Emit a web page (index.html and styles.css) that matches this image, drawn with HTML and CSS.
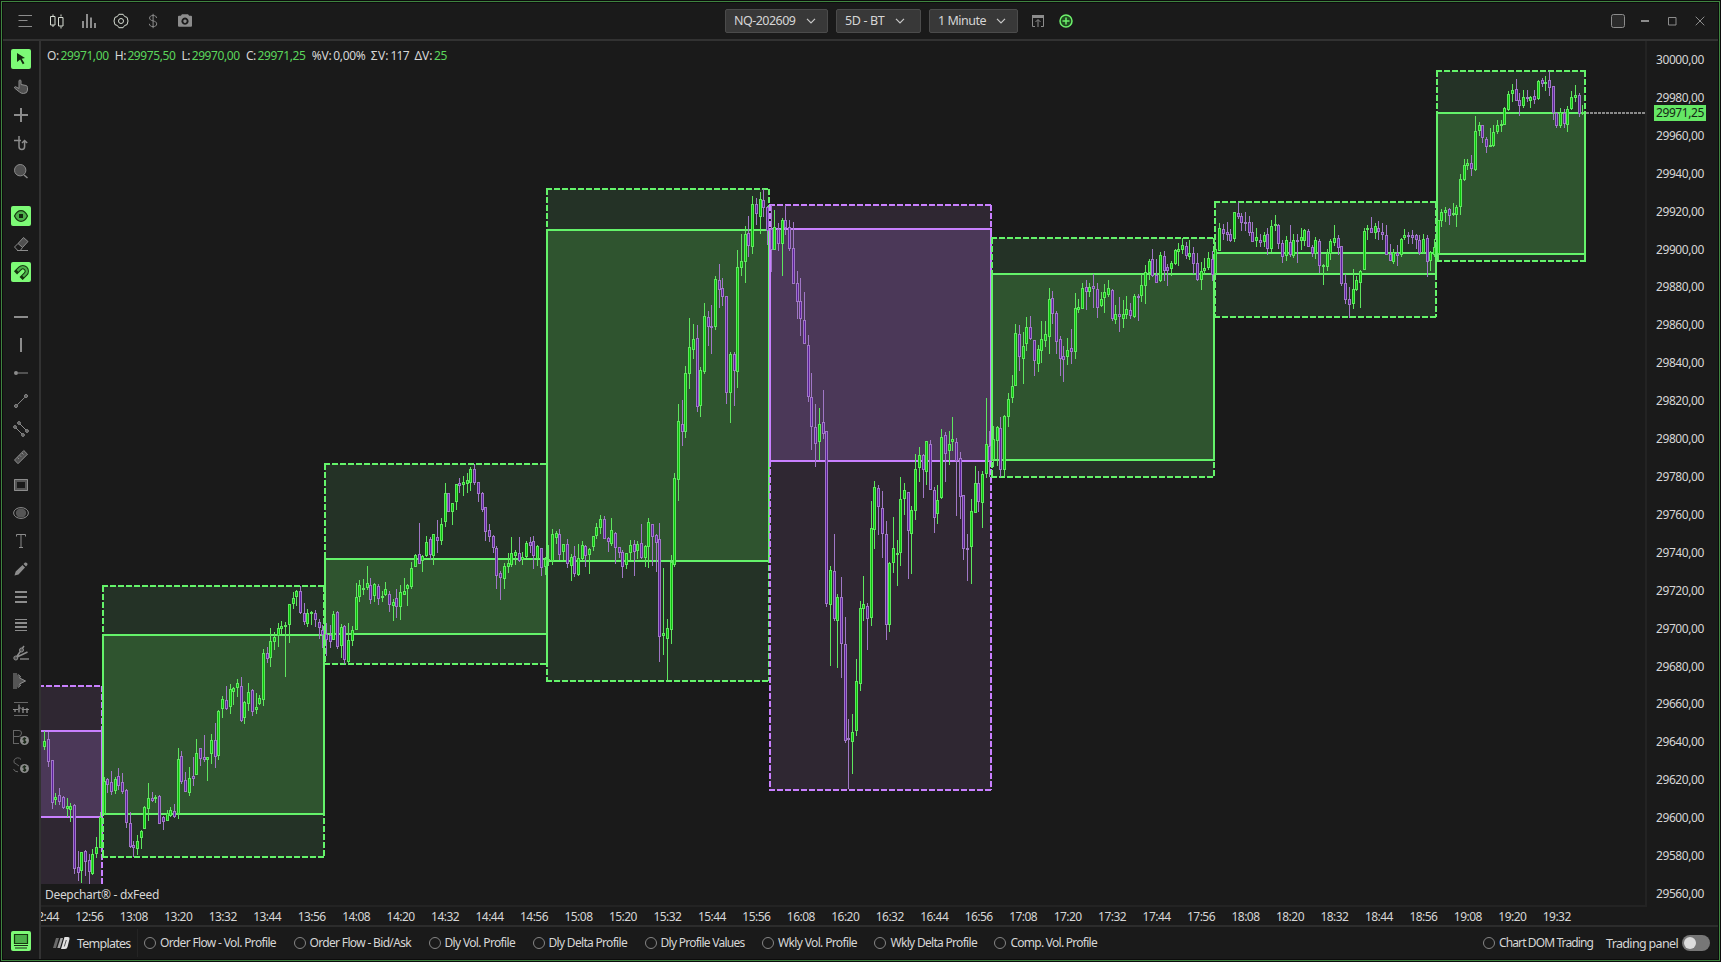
FILE: index.html
```html
<!DOCTYPE html>
<html lang="en">
<head>
<meta charset="utf-8">
<title>Deepchart</title>
<link rel="stylesheet" href="styles.css">
</head>
<body>
<div class="window">
  <header class="topbar">
    <div class="top-tools">
      <svg class="ic" viewBox="0 0 16 16"><path class="s" d="M1.5 2.5h13.5M1.5 7.5h9M1.5 13.5h13.5"/></svg>
      <svg class="ic lit" viewBox="0 0 16 16"><path class="s" d="M4 1.500v2M4 12v2M12 1.500v2M12 13.500v2M1.500 3.500h4.500v8.500h-4.500zM9.500 4.500h4.500v8.500h-4.500z"/></svg>
      <svg class="ic" viewBox="0 0 16 16"><path class="s w2" d="M2 8v7M6 1v14M10 4.500v10.500M14 10v5"/></svg>
      <svg class="ic lit" viewBox="0 0 16 16"><circle class="s" cx="8" cy="8" r="2.500"/><path class="s" d="M5.900 1.300h4.200l1.500 2.200 2.500.9.9 3.600-.9 3.600-2.500.9-1.500 2.200H5.900l-1.500-2.200-2.500-.9L1 8l.9-3.600 2.500-.9z"/></svg>
      <svg class="ic" viewBox="0 0 16 16"><path class="s" d="M11.500 5c0-1.700-1.300-2.500-3.400-2.500S4.600 3.300 4.600 5s1.400 2.400 3.500 2.900 3.600 1.200 3.600 3-1.500 2.700-3.600 2.700-3.700-.9-3.700-2.800M8.100.8v14.400"/></svg>
      <svg class="ic" viewBox="0 0 16 16"><path class="f" fill-rule="evenodd" d="M5 1.200h6l1.200 1.600H14q1 0 1 1v9q0 1-1 1H2q-1 0-1-1v-9q0-1 1-1h1.800zM8 4.600a3.600 3.600 0 1 0 .01 0zM8 6.500a1.700 1.700 0 1 1-.01 0z"/></svg>
    </div>
    <div class="selectors">
      <div class="drop d1"><span data-w="61.500">NQ-202609</span><svg viewBox="0 0 10 6"><path class="s" d="M1 .8l4 4 4-4"/></svg></div>
      <div class="drop d2"><span data-w="39.500">5D - BT</span><svg viewBox="0 0 10 6"><path class="s" d="M1 .8l4 4 4-4"/></svg></div>
      <div class="drop d3"><span data-w="48">1 Minute</span><svg viewBox="0 0 10 6"><path class="s" d="M1 .8l4 4 4-4"/></svg></div>
      <svg class="ic pop" viewBox="0 0 16 16"><path class="s" d="M5 13.500H2.500v-11h11v11H11M8 14V7M5.500 9L8 6.500 10.500 9"/><path class="f" d="M2 2h12v3H2z"/></svg>
      <svg class="ic add" viewBox="0 0 16 16"><circle cx="8" cy="8" r="6"/><path d="M8 4.500v7M4.500 8h7"/></svg>
    </div>
    <div class="win-tools">
      <svg class="ic" viewBox="0 0 16 16"><rect class="s box" x="1.500" y="1.500" width="13" height="13" rx="2"/></svg>
      <svg class="ic" viewBox="0 0 16 16"><path class="s w2" d="M4 8h8"/></svg>
      <svg class="ic" viewBox="0 0 16 16"><path class="s" d="M4.500 4.500h7.500v7.500H4.500z"/></svg>
      <svg class="ic" viewBox="0 0 16 16"><path class="s" d="M3.700 3.700l8.600 8.600M12.300 3.700l-8.600 8.600"/></svg>
    </div>
  </header>

  <div class="workspace">
    <nav class="sidebar">
      <div class="tool on"><svg class="ic" viewBox="0 0 16 16"><path class="dk" d="M4 2l8 5-3.300.8 2.800 4.500-1.800 1-2.500-4.700L4 11z"/></svg></div>
      <div class="tool"><svg class="ic" viewBox="0 0 16 16"><path class="s m" d="M6 9.500V2q0-1 1-1t1 1v3.500l5 1q1.500.4 1.500 2V11q0 3.500-4 3.500-2.500 0-4-1.500L1.500 9q-.3-1.200 1-1.300L6 9.500"/></svg></div>
      <div class="tool"><svg class="ic" viewBox="0 0 16 16"><path class="s w2" d="M8 1v14M1 8h14"/></svg></div>
      <div class="tool"><svg class="ic" viewBox="0 0 16 16"><path class="s w15" d="M1 5.500h7M6 1v10.500q0 3 2.800 3t2.800-3V6M9 8l2.600-2.500L14.200 8"/></svg></div>
      <div class="tool"><svg class="ic" viewBox="0 0 16 16"><circle class="s m" cx="7.200" cy="7.200" r="5.700"/><path class="s w15" d="M11 12l3.500 3"/></svg></div>
      <div class="rule"></div>
      <div class="tool on"><svg class="ic" viewBox="0 0 16 16"><path class="eye" d="M1.500 8Q4 2.700 8 2.700T14.500 8Q12 13.300 8 13.300T1.500 8z"/><path class="dk" d="M6 6h4v4H6z"/></svg></div>
      <div class="tool"><svg class="ic" viewBox="0 0 16 16"><path class="s m" d="M10.500 1.500l4.500 4-5.500 6-4.500-4z"/><path class="s" d="M5 7.500L1.500 11l3.300 3.500h2.500l2.200-3M4 14.500h11"/></svg></div>
      <div class="tool on"><svg class="ic" viewBox="0 0 16 16"><g fill="none"><path stroke="#16360f" stroke-width="4.400" d="M2.500 8.900L7 4.400A3.950 3.950 0 0 1 12.600 10L8.100 14.500"/><path stroke="#4cb04a" stroke-width="2.400" d="M4.500 6.900L7 4.400A3.950 3.950 0 0 1 12.600 10L10.100 12.500"/></g></svg></div>
      <div class="rule"></div>
      <div class="tool"><svg class="ic" viewBox="0 0 16 16"><path class="s w2" d="M1 8h14"/></svg></div>
      <div class="tool"><svg class="ic" viewBox="0 0 16 16"><path class="s w2" d="M8 1v14"/></svg></div>
      <div class="tool"><svg class="ic" viewBox="0 0 16 16"><circle class="f" cx="3" cy="8" r="2"/><path class="s dim w15" d="M5 8h10"/></svg></div>
      <div class="tool"><svg class="ic" viewBox="0 0 16 16"><circle class="s m" cx="3" cy="13" r="1.500"/><circle class="s m" cx="13" cy="3" r="1.500"/><path class="s" d="M4.300 11.800l7.500-7.500"/></svg></div>
      <div class="tool"><svg class="ic" viewBox="0 0 16 16"><circle class="s m" cx="2" cy="6" r="1.400"/><circle class="s m" cx="6" cy="2" r="1.400"/><circle class="s m" cx="14" cy="10" r="1.400"/><circle class="s m" cx="10" cy="14" r="1.400"/><path class="s" d="M3 7l6 6M7 3l6 6"/></svg></div>
      <div class="tool"><svg class="ic" viewBox="0 0 16 16"><path class="s m" d="M10.800 1.500l3.700 3.700-9.500 9.500L1.500 11zM4.500 8.500l1.500 1.500M6.700 6.300l1.500 1.500M9 4l1.500 1.500"/></svg></div>
      <div class="tool"><svg class="ic" viewBox="0 0 16 16"><path class="f mid" fill-rule="evenodd" d="M1 2h14v12H1zM4 5v6h8V5z"/><path class="s" d="M1.500 2.500h13v11h-13z"/></svg></div>
      <div class="tool"><svg class="ic" viewBox="0 0 16 16"><ellipse class="s" cx="8" cy="8" rx="7.400" ry="5.400"/><ellipse class="f mid" cx="8" cy="8" rx="5.200" ry="4.500"/></svg></div>
      <div class="tool"><svg class="ic" viewBox="0 0 16 16"><path class="s" d="M3.500 3.500v-2h9v2M6 14.500h4"/><path class="s dim w15" d="M8 2v12"/></svg></div>
      <div class="tool"><svg class="ic" viewBox="0 0 16 16"><path class="f" d="M1.500 14.500l1.200-4L9.500 4 12 6.500l-6.500 7zM10.500 3l1.500-1.400q1.200-.5 2.200.7.800 1-.1 2L13 5.500z"/></svg></div>
      <div class="tool"><svg class="ic" viewBox="0 0 16 16"><path class="s w2" d="M2 3h12M2 8h12M2 13h12"/></svg></div>
      <div class="tool"><svg class="ic" viewBox="0 0 16 16"><path class="s" d="M2 2.500h12M2 13.500h12"/><path class="s w2" d="M2 6h12M2 10h12"/></svg></div>
      <div class="tool"><svg class="ic" viewBox="0 0 16 16"><path class="s w15" d="M3.500 12L11 1M4 12L14.500 7"/><circle class="s m" cx="2.800" cy="13" r="2"/><circle class="s m" cx="8.500" cy="5" r="2"/><path class="s dim w2" d="M7 14h9"/></svg></div>
      <div class="tool"><svg class="ic" viewBox="0 0 16 16"><path class="f mid" d="M0 0h4l.5 2L8 3.500 6.500 5 9 6l4 2-4 2-2.500 1L8 12.500 4.500 14 4 16H0z"/><path class="s" d="M5 1.500l2.500 2L6.500 5 9 6.200 12.500 8 9 9.800 6.500 11l1 1.500-2.500 2"/></svg></div>
      <div class="tool"><svg class="ic" viewBox="0 0 16 16"><path class="s dim" d="M1 1.500h14M1 14.500h14"/><path class="s dim w2" d="M2 8v3M6 3.500v8M10 6v6M14 7v5"/><path class="s" d="M0 8.500h5l2-2 2 2h7"/></svg></div>
      <div class="tool"><svg class="ic" viewBox="0 0 16 16"><path class="s dim" d="M.5 1v14M0 1.500h6q2.500 0 2.500 2.500T6 7.500H1M0 14.500h6M8 9V7.500"/><circle class="f" cx="11.500" cy="11.500" r="4.500"/><path class="ink" d="M13 10q-1-1-2-.8-1.300.5-.8 1.600.3.500 1.300.7 1.500.5 1.300 1.500-.5 1.200-1.800.8L10 13M11.500 8.200v6.500"/></svg></div>
      <div class="tool"><svg class="ic" viewBox="0 0 16 16"><path class="s dim" d="M8 2.500Q7 .8 4.500.8T1 3.500t2.500 3.700L6 9M.5 12q1 3 4.500 2.800"/><circle class="f" cx="11.500" cy="11.500" r="4.500"/><path class="ink" d="M13 10q-1-1-2-.8-1.300.5-.8 1.600.3.500 1.300.7 1.500.5 1.300 1.500-.5 1.200-1.800.8L10 13M11.500 8.200v6.500"/></svg></div>
      <div class="tool on last"><svg class="ic" viewBox="0 0 16 16"><path class="eye" d="M1.500 1.500h13v9h-13z"/><path class="ink" d="M1 12.500h14M2 15h12"/></svg></div>
    </nav>

    <main class="main">
      <div class="chart-area">
        <div class="plot-col">
          <div class="plot">
            <svg id="plot" viewBox="41 41 1604 864" width="1604" height="864"></svg>
            <div class="ohlc">
              <span data-w="12">O:</span><b data-w="48">29971,00</b>
              <span data-w="11">H:</span><b data-w="48">29975,50</b>
              <span data-w="8.500">L:</span><b data-w="48">29970,00</b>
              <span data-w="10">C:</span><b data-w="48">29971,25</b>
              <span data-w="20">%V:</span><em data-w="32">0,00%</em>
              <span data-w="18">ΣV:</span><em data-w="18.500">117</em>
              <span data-w="18">ΔV:</span><b data-w="13">25</b>
            </div>
            <div class="credit" data-w="114">Deepchart® - dxFeed</div>
          </div>
          <div class="time-axis" id="times"></div>
        </div>
        <div class="price-axis" id="prices"><div class="last-price"><span data-w="48">29971,25</span></div></div>
      </div>
      <footer class="footer">
        <svg class="logo" viewBox="0 0 18 12"><path d="M4 1h3L4 11H1z" fill="#6a6a6a"/><path d="M8.500 1H11L8 11H5.300z" fill="#a9a9a9"/><path d="M12.500 0H16q2 0 1.500 2l-2 8q-.5 2-2.500 2H9z" fill="#e2e2e2"/><path d="M14.300 3l-2 6.500" stroke="#555" fill="none"/></svg>
        <span class="tpl" data-w="53.500">Templates</span>
        <div class="opts">
          <label><i></i><span data-w="116">Order Flow - Vol. Profile</span></label>
          <label><i></i><span data-w="101.500">Order Flow - Bid/Ask</span></label>
          <label><i></i><span data-w="70.500">Dly Vol. Profile</span></label>
          <label><i></i><span data-w="78.500">Dly Delta Profile</span></label>
          <label><i></i><span data-w="84">Dly Profile Values</span></label>
          <label><i></i><span data-w="79">Wkly Vol. Profile</span></label>
          <label><i></i><span data-w="86.500">Wkly Delta Profile</span></label>
          <label><i></i><span data-w="86.500">Comp. Vol. Profile</span></label>
        </div>
        <div class="trade">
          <label><i></i><span data-w="94">Chart DOM Trading</span></label>
          <span class="panel" data-w="72">Trading panel</span>
          <div class="switch"></div>
        </div>
      </footer>
    </main>
  </div>
</div>
<script src="chart.js"></script>
</body>
</html>
```

FILE: styles.css
```css
* { box-sizing: border-box; }
html, body { margin: 0; height: 100%; background: #0c0c0c; overflow: hidden; }
body { padding: 1px; font: 12px/16px "Noto Sans", "Open Sans", sans-serif; color: #d6d6d6; }
svg { display: block; }

.window { width: 1719px; height: 960px; border: 1px solid #3f8440; padding: 1px; display: flex; flex-direction: column; background-color: #0c0c0c; }
.topbar { height: 38px; flex: none; border-bottom: 2px solid #323232; background: #1a1a1a; display: grid; grid-template-columns: 722px 1fr 121px; align-items: center; }
.top-tools { display: flex; gap: 16px; padding-left: 14px; }
.ic { width: 16px; height: 16px; flex: none; }
.s { fill: none; stroke: #8c8c8c; stroke-width: 1; }
.f { fill: #8c8c8c; }
.w2 { stroke-width: 2; }
.w15 { stroke-width: 1.5; }
.m { fill: #505050; }
.mid { fill: #555; }
.dim { stroke: #666; }
.lit .s { stroke: #d6dcd2; }
.dk { fill: #13280f; }
.eye { fill: #4cb04a; stroke: #16360f; stroke-width: 1.2; }
.ink { fill: none; stroke: #1c2a1a; stroke-width: 1.2; }

.selectors { display: flex; align-items: center; }
.drop { height: 24px; border: 1px solid #4b4b4b; border-radius: 2px; background: #383838; display: flex; align-items: center; justify-content: space-between; padding: 0 11px 0 8px; margin-right: 8px; font-size: 12.500px; }
.drop svg { width: 10px; height: 6px; }
.drop .s { stroke: #c8c8c8; stroke-width: 1.2; }
.d1 { width: 103px; }
.d2 { width: 85px; padding-right: 15px; }
.d3 { width: 89px; }
.pop { margin-left: 4px; }
.add { margin-left: 12px; }
.add circle, .add path { fill: #1f4a20; stroke: #6df16b; stroke-width: 1.5; }
.win-tools { display: grid; grid-template-columns: 27px 27px 28px 28px; justify-items: center; padding-left: 7px; }
.box { fill: #2b2b2b; }

.workspace { flex: 1; display: flex; min-height: 0; }
.sidebar { width: 38px; border-right: 2px solid #323232; background: #1a1a1a; padding: 4px 0 8px; display: flex; flex-direction: column; align-items: center; }
.tool { width: 20px; height: 20px; margin: 4px 0; border-radius: 2px; display: grid; place-items: center; flex: none; }
.on { background: #7dfa76; }
.rule { height: 17px; flex: none; }
.last { margin-top: auto; margin-bottom: 0; }

.main { flex: 1; min-width: 0; display: flex; flex-direction: column; background: #1a1a1a; }
.chart-area { flex: 1; min-height: 0; display: flex; border-bottom: 2px solid #2c2c2c; }
.plot-col { width: 1606px; flex: none; display: flex; flex-direction: column; min-width: 0; }
.plot { height: 866px; flex: none; position: relative; border-right: 2px solid #232323; border-bottom: 2px solid #232323; }
.ohlc { position: absolute; left: 6px; top: 7px; display: flex; white-space: nowrap; }
.ohlc > * { font-weight: 400; font-style: normal; }
.ohlc span { margin-right: 1.600px; }
.ohlc b { color: #5bd65b; margin-right: 6.200px; }
.ohlc em { margin-right: 5.500px; }
.credit { position: absolute; left: 4px; top: 846px; white-space: nowrap; }
.time-axis { display: flex; flex: 1; overflow: hidden; }
.time-axis div { width: 44.470px; flex: none; text-align: center; white-space: nowrap; line-height: 20px; }
.time-axis div:first-child { margin-left: -18.400px; }
.price-axis { flex: 1; position: relative; }
.price-axis .p { height: 37.910px; line-height: 37px; padding-left: 9px; white-space: nowrap; }
.last-price { position: absolute; left: 7px; top: 64px; width: 52px; height: 16px; padding-left: 2px; background: #65e765; color: #152515; }

.footer { height: 32px; flex: none; display: flex; align-items: center; white-space: nowrap; }
.logo { width: 18px; height: 12px; margin-left: 11px; }
.tpl { font-size: 12.500px; margin: 2px 6px 0 7px; }
.opts { display: flex; gap: 17.500px; border-left: 1px solid #242424; height: 28px; align-items: center; padding-left: 6.500px; }
.footer label { display: flex; align-items: center; gap: 4px; }
.footer i { width: 12px; height: 12px; border: 1px solid #858585; border-radius: 50%; }
.trade { margin-left: auto; display: flex; align-items: center; margin-right: 8px; }
.panel { font-size: 12.500px; margin: 1px 4px 0 13px; }
.switch { width: 28px; height: 16px; border-radius: 8px; background: #777; padding: 2px; }
.switch::before { content: ""; display: block; width: 12px; height: 12px; border-radius: 50%; background: #dcdcdc; }
```

FILE: chart.js
```js
// Prices and times on the axes
const pad = n => String(n).padStart(2, "0");
const prices = document.getElementById("prices");
for (let p = 30000; p >= 29560; p -= 20) {
  prices.insertAdjacentHTML("beforeend", `<div class="p"><span data-w="48">${p},00</span></div>`);
}
const times = document.getElementById("times");
for (let t = 12 * 60 + 44; t <= 19 * 60 + 32; t += 12) {
  times.insertAdjacentHTML("beforeend", `<div><span data-w="28">${pad(Math.floor(t / 60))}:${pad(t % 60)}</span></div>`);
}

// Track text to its column width
document.querySelectorAll("[data-w]").forEach(el => {
  el.style.letterSpacing = "0";
  const range = document.createRange();
  range.selectNodeContents(el);
  const natural = range.getBoundingClientRect().width;
  el.style.letterSpacing = ((+el.dataset.w - natural) / el.textContent.length).toFixed(3) + "px";
});

// Hourly boxes: left, right, high, body top, body bottom, low, direction
const boxes = [
  [30, 102, 686, 731, 817, 1000, "p"],
  [103, 324, 586, 635, 814, 857, "g"],
  [325, 547, 464, 559, 634, 664, "g"],
  [547, 769, 189, 230, 561, 681, "g"],
  [770, 991, 205, 229, 461, 790, "p"],
  [992, 1214, 238, 274, 460, 477, "g"],
  [1215, 1436, 202, 253, 274, 317, "g"],
  [1437, 1585, 71, 113, 254, 261, "g"]
];

// One-minute bars per run: first minute index from 14:00, y origin, y scale,
// then direction and wick top, body top, body bottom, wick bottom
const runs = [
  [-76, 660, 3, "g213,243,262,270 p215,237,305,321 p300,300,428,446 g400,412,419,434 p384,405,426,436 p408,411,443,446 g415,438,448,472 g430,438,449,486 p432,435,626,641 p574,622,640,662 g575,577,632,668 p570,574,607,648 p582,600,635,672 g567,583,641,645 g531,562,581,594 g457,471,563,563 g350,364,462,464 p354,357,374,399 p333,367,395,404 g351,357,392,402 p324,349,377,389 p339,367,395,401 p387,389,489,505 p457,490,562,564 p543,555,564,592 g525,544,567,585 g510,512,534,566 g438,442,506,506 g369,415,446,482 p397,415,423,427 g406,411,417,428 p405,408,491,492 p468,471,486,509 g450,459,482,482 g441,451,467,472 p432,454,471,475 g264,297,463,476 p273,289,365,372 p336,361,395,396 g321,355,398,407 p290,347,356,378 g237,280,344,346 p263,265,297,319 p225,290,299,305 g290,290,299,363 g223,241,281,312 p189,241,292,324 g151,152,287,299"],
  [-28, 290, 3, "g1218,1228,1258,1284 p1188,1230,1258,1260 g1182,1198,1250,1272 g1190,1195,1207,1245 g1167,1180,1195,1220 p1161,1189,1292,1296 g1234,1237,1283,1302 g1178,1207,1241,1263 p1198,1201,1265,1277 g1209,1252,1259,1272 g1215,1225,1243,1246 g1077,1090,1229,1248 p1071,1089,1108,1119 g1014,1054,1103,1131 g1026,1041,1055,1080 g998,1015,1039,1071 g993,1009,1018,1032 g995,1006,1012,1161 g942,943,1006,1059 g906,925,943,957 g900,902,920,948 p889,904,970,972 p938,970,995,1006 g957,970,1001,1011 g963,965,970,1004 p959,970,989,1011 p987,997,1014,1048 p1005,1021,1035,1074"],
  [0, 440, 3, "p549,582,599,648 p555,585,605,624 g513,522,599,600 p513,517,620,627 g552,562,617,654 p555,559,659,672 g549,601,665,672 g558,571,602,618 g429,472,569,570 g420,436,472,486 g418,445,451,465 g378,430,443,450 p414,436,479,491 g429,433,467,486 p432,439,476,495 g453,468,474,487 g426,448,464,468 p453,463,494,516 g477,487,497,543 p447,475,500,534 g435,457,500,540 g414,454,464,465 g432,436,446,498 g366,385,440,446 g342,346,380,381 p249,343,371,372 g345,349,362,396 g288,307,347,351 p291,297,346,359 g282,283,347,375 p240,292,302,339 g234,253,302,315 g129,160,245,261 p159,160,215,216 g189,190,215,255 g132,133,185,210 p113,130,137,159 g108,127,135,167 g99,121,131,159 g81,88,128,153 p73,88,128,135 p126,127,161,186 p156,160,209,216 p201,202,275,303 p252,271,290,306 p285,289,323,339 p318,325,407,447 p393,400,413,480 g369,379,416,447 g339,370,380,399 g291,340,374,381 g330,337,349,375 p291,340,362,366 g336,352,359,375 g303,310,352,354 p292,307,317,339 p288,304,347,387 g315,319,356,378 p324,325,383,408 g352,356,380,405"],
  [60, 180, 3, "g1095,1138,1143,1158 g1047,1063,1143,1155 g1053,1060,1073,1092 p1047,1063,1124,1140 g1092,1093,1115,1140 p1077,1093,1151,1164 g1122,1132,1157,1203 p1098,1129,1181,1191 g1092,1135,1184,1188 g1083,1096,1137,1140 p1095,1099,1127,1161 g1105,1108,1124,1182 g1068,1069,1100,1113 g1029,1042,1067,1077 g1005,1018,1043,1062 p1008,1018,1076,1077 p1070,1075,1085,1116 g1014,1051,1091,1098 p1056,1060,1103,1152 p1101,1102,1118,1134 p1110,1117,1160,1194 g1119,1120,1154,1167 g1080,1096,1118,1140 p1080,1093,1115,1188 g1083,1093,1112,1137 p1032,1090,1133,1137 g1095,1099,1133,1161 g1014,1027,1100,1164 p1032,1033,1070,1158 p1062,1066,1088,1176 p1029,1078,1370,1446 g1164,1360,1367,1425 g1317,1345,1376,1500 g1125,1147,1349,1392 g879,895,1154,1160 g672,724,899,963 p660,733,755,798 g558,580,755,774 g414,502,581,627 g432,478,509,537 p435,475,680,696 g561,571,677,711 g369,409,575,582 p393,412,440,498 p375,439,444,522 g288,298,440,450 p252,301,329,384 p294,325,350,378 p348,349,638,672 g516,523,638,729 p516,523,572,678 g210,262,575,624 g162,244,263,288 g138,163,245,309 p108,160,197,231 g48,73,200,222 p54,73,101,135 g36,58,110,162 p27,61,83,111 p78,82,152,195"],
  [120, 190, 2.5705, "p39,100,153,210 g51,94,153,154 p85,99,140,158 g72,76,138,221 p39,76,97,116 p76,94,151,157 p82,148,241,242 p208,240,289,332 p226,286,331,375 p262,333,395,396 p373,399,531,545 p470,531,608,668 p550,610,652,712 g560,602,649,694 p514,597,626,640 p619,620,1063,1071 g967,978,1068,1223 p884,980,1102,1109 g1038,1045,1107,1229 p995,1047,1166,1254 p1098,1168,1416,1421 p1359,1409,1414,1541 g1347,1392,1418,1501 g1206,1261,1390,1403 g1056,1075,1269,1288 g992,1065,1076,1108 p1062,1070,1104,1182 g799,870,1099,1121 g748,764,873,923 p758,767,816,886 p774,818,883,946 p851,885,1117,1157 g956,960,1117,1136 g841,919,958,984 g899,933,937,1017 g738,793,932,967 g753,772,793,835 p776,777,876,1000 g812,822,883,987 g679,716,824,848 g661,682,714,751 p679,682,719,792 g645,646,724,758 p643,654,770,771 p764,770,842,882 g758,798,834,859 g614,636,791,794 p622,631,678,751 g619,654,672,707 g584,641,649,671 p637,649,697,838 p673,690,788,846 p784,785,922,951 p884,919,924,1005 g794,826,917,1013 g709,754,829,830 p722,754,801,828 g722,731,804,869 g535,654,729,740 p619,659,697,737"],
  [180, 190, 3, "g708,748,810,830 g708,712,752,828 p681,715,839,860 g675,679,839,860 g609,628,680,711 g555,589,623,639 g402,430,587,588 p405,433,500,543 g426,469,506,582 g381,412,461,483 p378,412,446,450 p450,451,512,558 g465,478,521,546 g393,448,482,519 g393,433,452,471 g294,328,440,492 p303,325,371,402 p363,370,455,492 p438,448,506,558 p468,499,509,575 g444,481,500,525 p417,475,485,522 g309,355,485,507 g328,351,359,368 g279,295,356,357 p270,292,305,360 g279,292,305,321 p252,289,296,354 p279,298,353,384 g306,328,347,351 g282,307,323,369 g270,295,314,321 p297,301,386,393 g345,373,389,402 p321,372,382,426 g330,373,386,414 g318,358,374,387 p339,361,377,387 g312,319,380,384 p312,318,325,393 g252,286,317,336 g225,247,287,342 g207,214,248,270 p177,208,257,261 p207,255,278,279 g186,196,272,276 p183,199,242,273 p222,232,242,288 g213,220,236,258 g177,181,221,225 g160,178,185,228 g144,166,179,192 p156,169,197,207 g150,190,200,210 p171,190,221,252 p189,220,269,272 g216,244,269,300 g204,235,242,255 g186,205,233,240 p183,208,254,273"],
  [240, 50, 3, "g588,596,672,675 g519,535,602,603 p522,538,553,570 p516,546,556,574 p537,552,572,575 g486,487,566,576 p456,490,500,507 p489,499,518,543 p486,515,521,543 p498,515,548,557 p516,545,575,576 g534,562,572,591 p552,569,579,591 g546,556,576,591 p534,553,596,615 g510,529,597,606 g496,523,528,543 p522,526,581,597 p570,580,620,639 g559,571,619,633 p525,577,615,621 g552,571,617,624 p552,571,577,639 g534,562,574,600 g537,541,574,588 p537,544,590,591 p585,590,611,621 g561,571,611,627 p567,574,648,669 g642,646,652,705 g597,610,650,663 g567,574,612,630 g525,565,579,588 p555,565,593,615 p588,589,701,708 p672,700,749,762 p711,748,766,803 g657,718,762,777 g678,691,719,723 g660,664,698,774 g534,544,659,660 g525,535,541,570 p501,535,548,549 g519,529,549,567 p513,535,545,570 p519,547,556,570 p525,556,614,615 p582,613,632,633 g597,607,635,641 p585,610,617,648 g564,568,614,620 g537,556,565,570 p547,556,562,582 p540,556,563,582 p552,556,569,597 p555,569,610,615 g552,568,608,611 p555,565,635,681 g603,607,632,663 g567,590,615,620"],
  [300, 50, 3, "g510,511,612,633 g477,487,514,531 g471,480,488,516 p474,478,497,525 g459,490,494,498 g465,472,494,531 g372,388,470,495 g327,346,389,393 g327,340,347,360 p315,340,356,378 g198,244,359,363 g216,226,242,258 p225,226,263,279 p261,268,290,309 g234,286,291,292 g225,247,288,291 g210,226,245,252 g210,223,227,246 g171,175,224,225 g123,133,179,183 g102,121,133,156 p87,118,152,153 p129,151,167,198 g120,142,167,174 p120,142,147,156 g138,142,152,174 p120,139,149,162 g90,94,146,150 p84,91,101,111 g78,95,98,123 p63,91,113,138 p108,109,188,210 p186,190,227,234 g174,187,227,234 p177,190,221,234 g168,178,224,246 g123,142,177,180 g105,136,143,156 p129,136,191,201 g165,186,193,196"]
];

const tone = {
  g: { line: "#64f36a", outer: "#243226", body: "#2f542f", edge: "#5ee65e", fill: "#08c408" },
  p: { line: "#c980ff", outer: "#2f2732", body: "#4b3858", edge: "#a077c6", fill: "#5c1e9c" }
};
let out = "";

for (const [l, r, hi, top, bot, lo, d] of boxes) {
  const c = tone[d];
  const clip = Math.min(lo, 884);
  out += `<rect x="${l}" y="${hi}" width="${r - l}" height="${clip - hi}" fill="${c.outer}"/>`;
  out += `<rect x="${l}" y="${top}" width="${r - l}" height="${bot - top}" fill="${c.body}"/>`;
}
for (const [l, r, hi, top, bot, lo, d] of boxes) {
  const end = Math.min(lo, 884);
  const dash = lo > 884 ? `M${l} ${hi}H${r}M${r} ${hi}V${end}` : `M${l - 1} ${hi}H${r + 1}M${l - 1} ${lo}H${r + 1}M${l} ${hi}V${lo}M${r} ${hi}V${lo}`;
  out += `<path d="${dash}" fill="none" stroke="${tone[d].line}" stroke-width="2" stroke-dasharray="6 2"/>`;
  out += `<rect x="${l}" y="${top}" width="${r - l}" height="${bot - top}" fill="none" stroke="${tone[d].line}" stroke-width="2"/>`;
}
for (const [start, y0, scale, text] of runs) {
  text.split(" ").forEach((bar, i) => {
    const c = tone[bar[0]];
    const [wt, bt, bb, wb] = bar.slice(1).split(",").map(v => Math.round(y0 + v / scale));
    const x = Math.floor(326.45 + (start + i) * 3.706);
    const h = Math.max(bb - bt, 2);
    out += `<rect x="${x}" y="${wt}" width="1" height="${Math.max(wb - wt, 1)}" fill="${c.edge}"/>`;
    out += `<rect x="${x - 1}" y="${bt}" width="3" height="${h}" fill="${c.edge}"/>`;
    if (h > 2) out += `<rect x="${x}" y="${bt + 1}" width="1" height="${h - 2}" fill="${c.fill}"/>`;
  });
}
out += `<path d="M1586 113H1645" stroke="#b0b0b0" stroke-width="1.500" stroke-dasharray="3 1"/>`;
document.getElementById("plot").innerHTML = out;
```
